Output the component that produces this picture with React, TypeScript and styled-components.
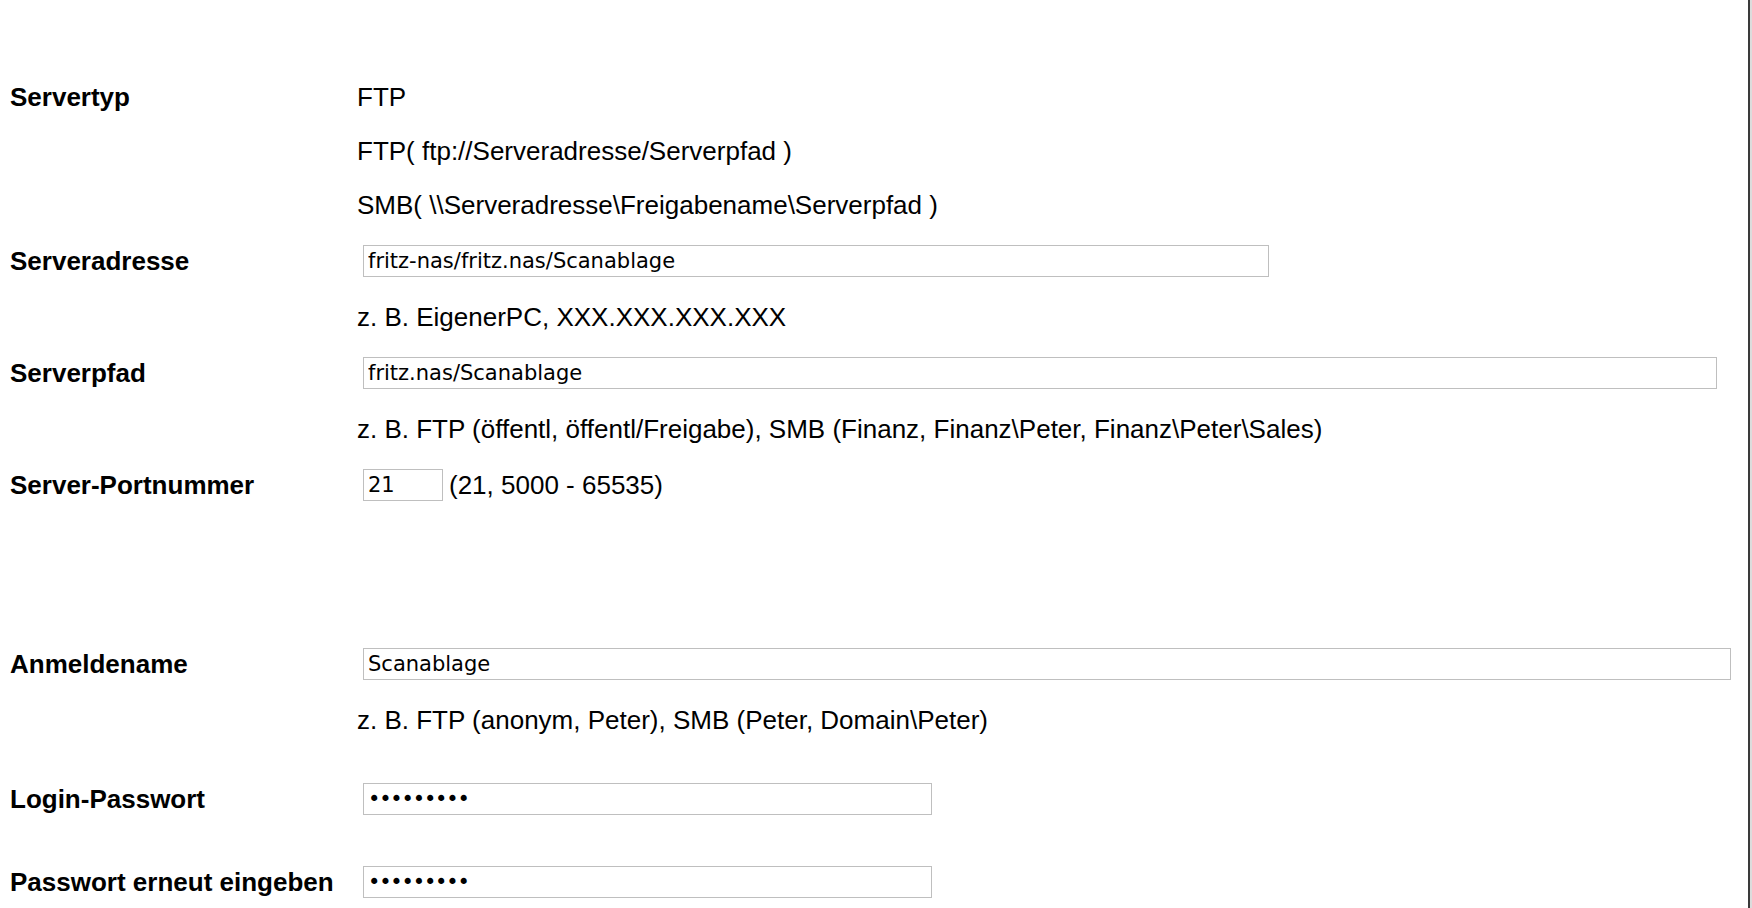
import React from "react";
import styled, { createGlobalStyle } from "styled-components";

const GlobalStyle = createGlobalStyle`
  html, body {
    margin: 0;
    padding: 0;
    background: #ffffff;
    overflow: hidden;
  }
  * { box-sizing: border-box; }
`;

const Frame = styled.div`
  width: 100vw;
  height: 100vh;
  border-right: 2px solid #dcdcdc;
  background: #ffffff;
  overflow: hidden;
`;

const Page = styled.div`
  height: 100%;
  border-right: 2px solid #3a3a3a;
  padding-top: 70px;
  font-family: "Liberation Sans", Arial, Helvetica, sans-serif;
  color: #000;
`;

const Form = styled.div`
  display: flex;
  flex-direction: column;
`;

const Row = styled.div<{ $h: number; $mt?: number }>`
  display: grid;
  grid-template-columns: 357px 1fr;
  align-items: center;
  height: ${(p) => p.$h}px;
  margin-top: ${(p) => p.$mt ?? 0}px;
`;

const Label = styled.div`
  padding-left: 10px;
  font-size: 26px;
  font-weight: 700;
  line-height: 30px;
  white-space: nowrap;
`;

const Value = styled.div`
  display: flex;
  align-items: center;
  gap: 6px;
  font-size: 26px;
  line-height: 30px;
  white-space: nowrap;
`;

const Field = styled.input<{ $w: number; $secret?: boolean }>`
  width: ${(p) => p.$w}px;
  height: 32px;
  margin: 0 0 0 6px;
  padding: 0 4px;
  border: 1px solid #bfbfbf;
  border-radius: 0;
  background: #ffffff;
  font-family: "DejaVu Sans", Verdana, sans-serif;
  font-size: 21px;
  letter-spacing: ${(p) => (p.$secret ? "-1.2px" : "normal")};
  color: #000;
  outline: none;
`;

const PortHint = styled.span`
  font-size: 26px;
`;

export default function App() {
  return (
    <>
      <GlobalStyle />
      <Frame>
        <Page>
          <Form>
            <Row $h={54}>
              <Label>Servertyp</Label>
              <Value>FTP</Value>
            </Row>
            <Row $h={54}>
              <Label />
              <Value>FTP( ftp://Serveradresse/Serverpfad )</Value>
            </Row>
            <Row $h={54}>
              <Label />
              <Value>{"SMB( \\\\Serveradresse\\Freigabename\\Serverpfad )"}</Value>
            </Row>
            <Row $h={58}>
              <Label>Serveradresse</Label>
              <Value>
                <Field $w={906} type="text" defaultValue="fritz-nas/fritz.nas/Scanablage" />
              </Value>
            </Row>
            <Row $h={54}>
              <Label />
              <Value>z. B. EigenerPC, XXX.XXX.XXX.XXX</Value>
            </Row>
            <Row $h={58}>
              <Label>Serverpfad</Label>
              <Value>
                <Field $w={1354} type="text" defaultValue="fritz.nas/Scanablage" />
              </Value>
            </Row>
            <Row $h={54}>
              <Label />
              <Value>
                {"z. B. FTP (öffentl, öffentl/Freigabe), SMB (Finanz, Finanz\\Peter, Finanz\\Peter\\Sales)"}
              </Value>
            </Row>
            <Row $h={58}>
              <Label>Server-Portnummer</Label>
              <Value>
                <Field $w={80} type="text" defaultValue="21" />
                <PortHint>(21, 5000 - 65535)</PortHint>
              </Value>
            </Row>
            <Row $h={58} $mt={121}>
              <Label>Anmeldename</Label>
              <Value>
                <Field $w={1368} type="text" defaultValue="Scanablage" />
              </Value>
            </Row>
            <Row $h={54}>
              <Label />
              <Value>{"z. B. FTP (anonym, Peter), SMB (Peter, Domain\\Peter)"}</Value>
            </Row>
            <Row $h={58} $mt={23}>
              <Label>Login-Passwort</Label>
              <Value>
                <Field $w={569} $secret type="password" defaultValue="123456789" />
              </Value>
            </Row>
            <Row $h={58} $mt={25}>
              <Label>Passwort erneut eingeben</Label>
              <Value>
                <Field $w={569} $secret type="password" defaultValue="123456789" />
              </Value>
            </Row>
          </Form>
        </Page>
      </Frame>
    </>
  );
}
